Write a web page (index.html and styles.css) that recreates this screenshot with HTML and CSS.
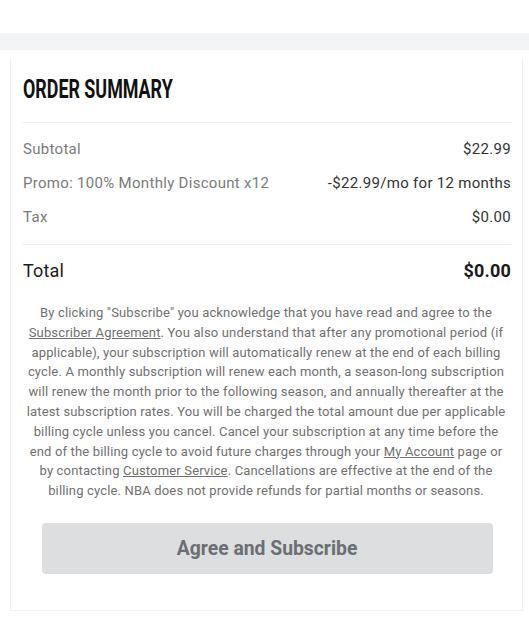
FILE: index.html
```html
<!DOCTYPE html>
<html lang="en">

<head>
    <meta charset="UTF-8">
    <meta name="viewport" content="width=device-width, initial-scale=1.0">
    <title>Order Summary</title>
    <link rel="stylesheet" href="styles.css">
</head>

<body>
    <div class="top-space"></div>
    <div class="band"></div>
    <div class="card">
        <h1 class="title"><span>ORDER SUMMARY</span></h1>
        <div class="lines">
            <div class="line">
                <span class="label">Subtotal</span>
                <span class="value">$22.99</span>
            </div>
            <div class="line">
                <span class="label">Promo: 100% Monthly Discount x12</span>
                <span class="value">-$22.99/mo for 12 months</span>
            </div>
            <div class="line">
                <span class="label">Tax</span>
                <span class="value">$0.00</span>
            </div>
        </div>
        <div class="total">
            <span>Total</span>
            <span class="total-value">$0.00</span>
        </div>
        <p class="terms">
            By clicking "Subscribe" you acknowledge that you have read and agree to the
            <a href="#">Subscriber Agreement</a>. You also understand that after any promotional period (if
            applicable), your subscription will automatically renew at the end of each billing
            cycle. A monthly subscription will renew each month, a season-long subscription
            will renew the month prior to the following season, and annually thereafter at the
            latest subscription rates. You will be charged the total amount due per applicable
            billing cycle unless you cancel. Cancel your subscription at any time before the
            end of the billing cycle to avoid future charges through your <a href="#">My Account</a> page or
            by contacting <a href="#">Customer Service</a>. Cancellations are effective at the end of the
            billing cycle. NBA does not provide refunds for partial months or seasons.
        </p>
        <button type="button" class="subscribe" disabled><span>Agree and Subscribe</span></button>
    </div>
</body>

</html>
```
FILE: styles.css
```css
* {
    margin: 0;
    padding: 0;
    box-sizing: border-box;
}

body {
    font-family: Roboto, 'Liberation Sans', sans-serif;
    color: #333;
    background: #fff;
}

.top-space {
    height: 33px;
}

.band {
    height: 17px;
    background: #f3f4f6;
}

.card {
    margin: 8px 6px 5px 10px;
    padding: 17px 11px 36px 12px;
    border: 1px solid #f2f2f2;
    border-top: none;
    background: #fff;
}

.title {
    font-size: 25px;
    line-height: 30px;
    font-weight: 700;
    color: #111;
    white-space: nowrap;
}

.title span {
    display: inline-block;
    transform: scaleX(0.715);
    transform-origin: left center;
}

.lines {
    margin-top: 17px;
    padding: 9px 0 10px;
    border-top: 1px solid #ececec;
    border-bottom: 1px solid #ececec;
}

.line {
    display: flex;
    justify-content: space-between;
    font-size: 15px;
    line-height: 34px;
    letter-spacing: 0.3px;
}

.label {
    color: #7a7a7a;
}

.value {
    color: #333;
}

.total {
    display: flex;
    justify-content: space-between;
    font-size: 18px;
    line-height: 24px;
    padding-top: 14px;
    color: #1a1a1a;
    letter-spacing: 0.2px;
}

.total-value {
    font-weight: 700;
}

.terms {
    margin-top: 20px;
    padding: 0 5px 0 3px;
    text-align: center;
    font-size: 13px;
    line-height: 19.8px;
    letter-spacing: 0.16px;
    color: #707070;
}

.terms a {
    color: #707070;
    text-decoration: underline;
}

.subscribe {
    display: block;
    margin: 22px 18px 0 19px;
    width: calc(100% - 37px);
    height: 51px;
    border: none;
    border-radius: 4px;
    background: #dcdee0;
    color: #6b6e72;
    font-family: Roboto, 'Liberation Sans', sans-serif;
    font-size: 21px;
    font-weight: 700;
}

.subscribe span {
    display: inline-block;
    transform: scaleX(0.92);
}
```
